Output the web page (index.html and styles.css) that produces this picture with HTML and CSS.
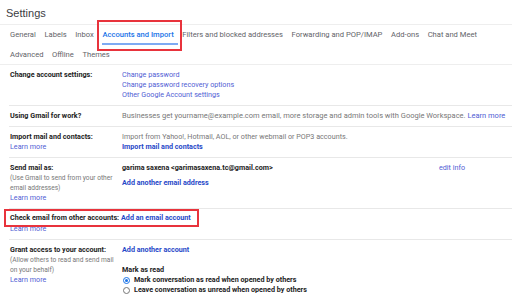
FILE: index.html
```html
<!DOCTYPE html>
<html lang="en">
<head>
    <meta charset="UTF-8">
    <title>Settings</title>
    <link rel="stylesheet" href="styles.css">
</head>
<body>
    <div class="page">
        <!-- Header -->
        <h1 class="title">Settings</h1>

        <!-- Tabs -->
        <div class="tabs">
            <div class="tab-row">
                <span class="tab">General</span>
                <span class="tab">Labels</span>
                <span class="tab">Inbox</span>
                <span class="tab active">Accounts and Import<span class="mark-tab"></span></span>
                <span class="tab">Filters and blocked addresses</span>
                <span class="tab">Forwarding and POP/IMAP</span>
                <span class="tab">Add-ons</span>
                <span class="tab">Chat and Meet</span>
            </div>
            <div class="tab-row">
                <span class="tab">Advanced</span>
                <span class="tab">Offline</span>
                <span class="tab">Themes</span>
            </div>
        </div>

        <!-- Settings rows -->
        <div class="rows">
            <div class="row">
                <div class="label">Change account settings:</div>
                <div class="value">
                    <a class="link">Change password</a>
                    <a class="link">Change password recovery options</a>
                    <a class="link">Other Google Account settings</a>
                </div>
            </div>

            <div class="row">
                <div class="label">Using Gmail for work?</div>
                <div class="value wide">
                    <span class="muted">Businesses get yourname@example.com email, more storage and admin tools with Google Workspace.</span>
                    <a class="link">Learn more</a>
                </div>
            </div>

            <div class="row">
                <div class="label">
                    Import mail and contacts:
                    <a class="link">Learn more</a>
                </div>
                <div class="value">
                    <span class="muted">Import from Yahoo!, Hotmail, AOL, or other webmail or POP3 accounts.</span>
                    <a class="link strong">Import mail and contacts</a>
                </div>
            </div>

            <div class="row">
                <div class="label">
                    Send mail as:
                    <span class="hint">(Use Gmail to send from your other email addresses)</span>
                    <a class="link">Learn more</a>
                </div>
                <div class="value">
                    <span class="dark">garima saxena &lt;garimasaxena.tc@gmail.com&gt;</span>
                    <a class="link strong spaced">Add another email address</a>
                </div>
                <div class="side">
                    <a class="link">edit info</a>
                </div>
            </div>

            <div class="row row-check">
                <div class="mark-row">
                    <span class="label">Check email from other accounts:</span>
                    <a class="link strong">Add an email account</a>
                </div>
                <a class="link under">Learn more</a>
            </div>

            <div class="row">
                <div class="label">
                    Grant access to your account:
                    <span class="hint">(Allow others to read and send mail on your behalf)</span>
                    <a class="link">Learn more</a>
                </div>
                <div class="value">
                    <a class="link strong">Add another account</a>
                    <span class="dark gap-top">Mark as read</span>
                    <label class="option"><span class="radio checked"></span>Mark conversation as read when opened by others</label>
                    <label class="option"><span class="radio"></span>Leave conversation as unread when opened by others</label>
                </div>
            </div>
        </div>
    </div>
</body>
</html>
```

FILE: styles.css
```css
body {
    margin: 0;
    background: #ffffff;
    font-family: Roboto, "Liberation Sans", Arial, sans-serif;
    font-size: 7.2px;
    line-height: 10px;
    color: #222222;
}
.page {
    width: 512px;
    height: 298px;
    overflow: hidden;
}

/* header */
.title {
    margin: 0;
    padding: 6px 0 0 6px;
    height: 18px;
    font-family: "Liberation Sans", Arial, sans-serif;
    font-size: 11px;
    line-height: 14px;
    font-weight: normal;
    color: #3c4043;
    border-bottom: 1px solid #eeeeee;
}

/* tabs */
.tabs {
    border-bottom: 1px solid #eeeeee;
    padding-left: 10px;
}
.tab-row {
    display: flex;
    gap: 8.6px;
    height: 20px;
    align-items: center;
}
.tab-row + .tab-row {
    height: 19px;
}
.tab {
    position: relative;
    font-size: 7.6px;
    color: #5f6368;
    white-space: nowrap;
}
.tab.active {
    color: #1a73e8;
    font-weight: 500;
}
.tab.active::after {
    content: "";
    position: absolute;
    left: 0;
    right: -4px;
    bottom: -5px;
    height: 2px;
    background: #7eaaf3;
}
.mark-tab {
    position: absolute;
    left: -5px;
    right: -8px;
    top: -10px;
    bottom: -11px;
    border: 2px solid #e8333c;
}

/* rows */
.rows {
    margin-left: 9px;
}
.row {
    display: grid;
    grid-template-columns: 112px 316px auto;
    padding: 5px 0 5px 1px;
    border-bottom: 1px solid #e8e8e8;
}
.label {
    display: flex;
    flex-direction: column;
    font-weight: bold;
    white-space: nowrap;
}
.value {
    display: flex;
    flex-direction: column;
    white-space: nowrap;
}
.value.wide {
    display: block;
    grid-column: 2 / 4;
    font-size: 7.5px;
}
.link {
    color: #5060d4;
    font-weight: normal;
    cursor: pointer;
}
.link.strong {
    color: #2748c8;
    font-weight: bold;
}
.muted {
    color: #777777;
}
.dark {
    color: #222222;
    font-weight: bold;
}
.hint {
    font-weight: normal;
    font-size: 6.6px;
    color: #777777;
    white-space: normal;
    width: 105px;
}
.spaced {
    margin-top: 5px;
}
.gap-top {
    margin-top: 10px;
}
.side {
    padding-left: 1px;
}

/* highlighted row */
.row-check {
    display: flex;
    flex-direction: column;
    padding: 0 0 5px 1px;
}
.mark-row {
    position: relative;
    z-index: 1;
    display: flex;
    align-self: flex-start;
    margin-left: -6px;
    padding: 2px 6px 2px 4px;
    white-space: nowrap;
    background: #ffffff;
    border: 2px solid #e8333c;
}
.mark-row .label {
    display: block;
    min-width: 111px;
}
.under {
    margin-top: -3px;
    align-self: flex-start;
}

/* radio options */
.option {
    display: flex;
    align-items: center;
    gap: 4px;
    margin-left: 1px;
    font-weight: bold;
    color: #222222;
}
.radio {
    width: 5px;
    height: 5px;
    border: 1px solid #777777;
    border-radius: 50%;
    position: relative;
}
.radio.checked {
    border-color: #1a73e8;
}
.radio.checked::after {
    content: "";
    position: absolute;
    left: 1px;
    top: 1px;
    width: 3px;
    height: 3px;
    border-radius: 50%;
    background: #1a73e8;
}
```
